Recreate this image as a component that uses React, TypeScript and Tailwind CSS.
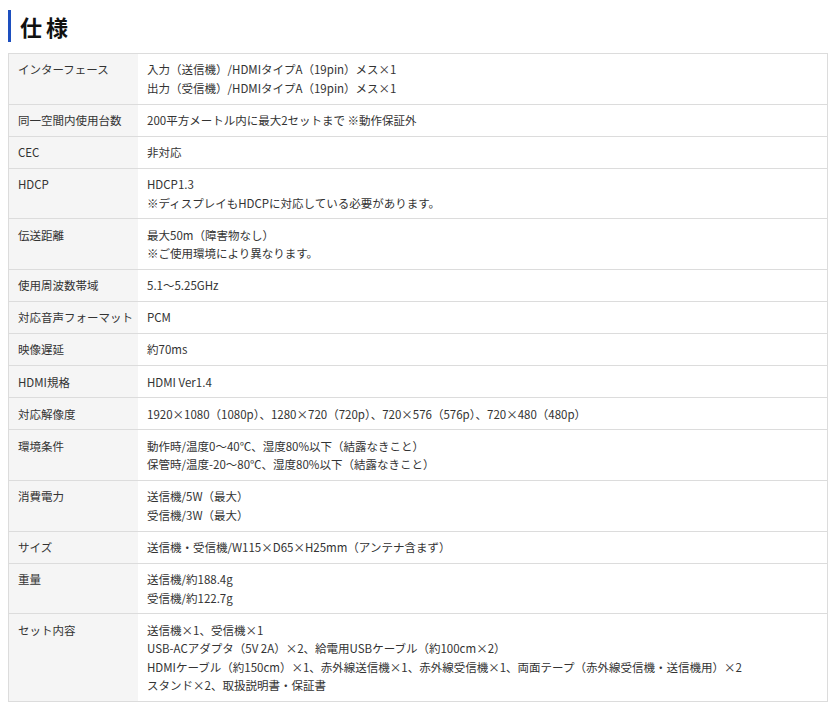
import React from "react";

const rows: [string, string[]][] = [
  ["インターフェース", ["入力（送信機）/HDMIタイプA（19pin）メス×1", "出力（受信機）/HDMIタイプA（19pin）メス×1"]],
  ["同一空間内使用台数", ["200平方メートル内に最大2セットまで ※動作保証外"]],
  ["CEC", ["非対応"]],
  ["HDCP", ["HDCP1.3", "※ディスプレイもHDCPに対応している必要があります。"]],
  ["伝送距離", ["最大50m（障害物なし）", "※ご使用環境により異なります。"]],
  ["使用周波数帯域", ["5.1〜5.25GHz"]],
  ["対応音声フォーマット", ["PCM"]],
  ["映像遅延", ["約70ms"]],
  ["HDMI規格", ["HDMI Ver1.4"]],
  ["対応解像度", ["1920×1080（1080p）、1280×720（720p）、720×576（576p）、720×480（480p）"]],
  ["環境条件", ["動作時/温度0〜40℃、湿度80%以下（結露なきこと）", "保管時/温度-20〜80℃、湿度80%以下（結露なきこと）"]],
  ["消費電力", ["送信機/5W（最大）", "受信機/3W（最大）"]],
  ["サイズ", ["送信機・受信機/W115×D65×H25mm（アンテナ含まず）"]],
  ["重量", ["送信機/約188.4g", "受信機/約122.7g"]],
  [
    "セット内容",
    [
      "送信機×1、受信機×1",
      "USB-ACアダプタ（5V 2A）×2、給電用USBケーブル（約100cm×2）",
      "HDMIケーブル（約150cm）×1、赤外線送信機×1、赤外線受信機×1、両面テープ（赤外線受信機・送信機用）×2",
      "スタンド×2、取扱説明書・保証書",
    ],
  ],
];

export default function App() {
  return (
    <div
      className="w-[834px] h-[708px] bg-white text-[#333] overflow-hidden"
      style={{ fontFamily: '"Noto Sans CJK JP", "Noto Sans", sans-serif' }}
    >
      <div className="pt-[10px] pl-[8px] flex items-center">
        <div className="w-[3px] h-[32px] bg-[#1d4fbf]" />
        <h2 className="ml-[9px] text-[22px] leading-[32px] font-bold tracking-[4px] text-[#111]">仕様</h2>
      </div>
      <div className="mt-[11px] ml-[8px] w-[820px] border-t border-l border-r border-[#dcdcdc] text-[11.5px]">
        {rows.map(([label, values], i) => (
          <div key={i} className="flex border-b border-[#dcdcdc]">
            <div className="w-[129px] shrink-0 bg-[#f5f5f5] pl-[9px] py-[6.3px] leading-[18.5px]">{label}</div>
            <div className="flex-1 pl-[9px] py-[6.3px] leading-[18.5px]">
              {values.map((v, j) => (
                <div key={j} className="h-[18.5px]">{v}</div>
              ))}
            </div>
          </div>
        ))}
      </div>
    </div>
  );
}
